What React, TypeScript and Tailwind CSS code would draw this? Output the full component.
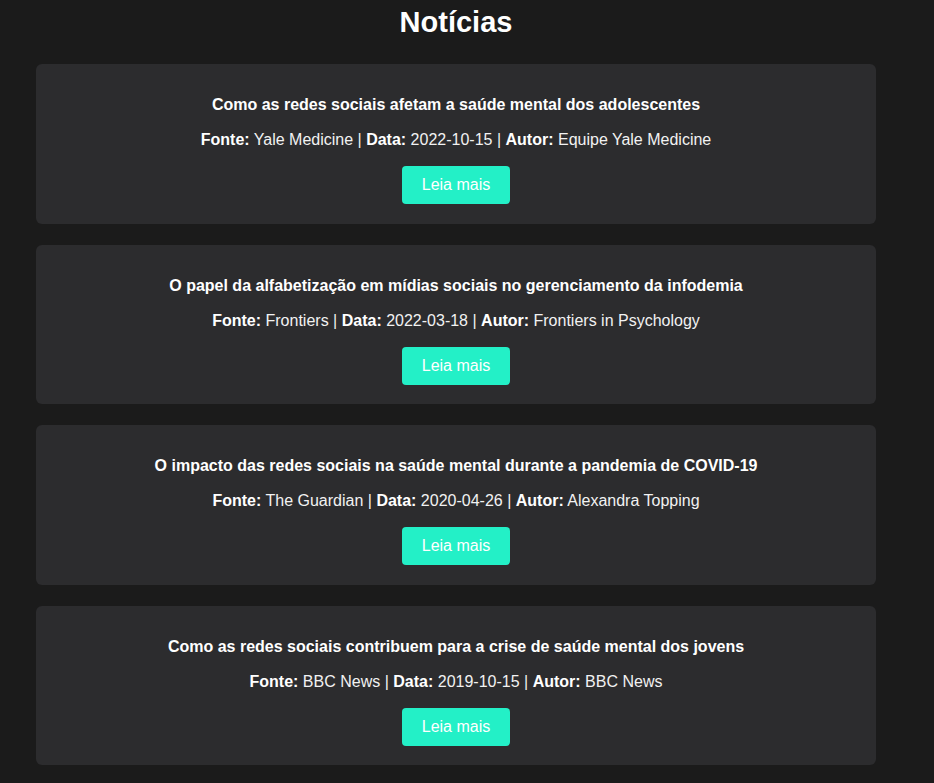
import React from 'react';

type Noticia = {
    titulo: string;
    fonte: string;
    data: string;
    autor: string;
};

const noticias: Noticia[] = [
    {
        titulo: 'Como as redes sociais afetam a saúde mental dos adolescentes',
        fonte: 'Yale Medicine',
        data: '2022-10-15',
        autor: 'Equipe Yale Medicine',
    },
    {
        titulo: 'O papel da alfabetização em mídias sociais no gerenciamento da infodemia',
        fonte: 'Frontiers',
        data: '2022-03-18',
        autor: 'Frontiers in Psychology',
    },
    {
        titulo: 'O impacto das redes sociais na saúde mental durante a pandemia de COVID-19',
        fonte: 'The Guardian',
        data: '2020-04-26',
        autor: 'Alexandra Topping',
    },
    {
        titulo: 'Como as redes sociais contribuem para a crise de saúde mental dos jovens',
        fonte: 'BBC News',
        data: '2019-10-15',
        autor: 'BBC News',
    },
];

const NoticiaCard = ({ noticia }: { noticia: Noticia }) => (
    <div className="rounded-md bg-[#2c2c2e] px-5 pt-5 pb-[19.5px] text-center">
        <h3 className="mt-3 text-base leading-[18px] font-bold text-white">
            {noticia.titulo}
        </h3>
        <p className="mt-[17px] text-base leading-[18px] text-[#f2f2f2]">
            <strong className="font-bold text-white">Fonte:</strong> {noticia.fonte} |{' '}
            <strong className="font-bold text-white">Data:</strong> {noticia.data} |{' '}
            <strong className="font-bold text-white">Autor:</strong> {noticia.autor}
        </p>
        <a
            href="#"
            className="mt-[17px] inline-block rounded bg-[#23f0c7] px-5 py-[10px] text-base leading-[18px] text-white"
        >
            Leia mais
        </a>
    </div>
);

export default function App() {
    return (
        <div className="min-h-[783px] bg-[#1b1b1b] font-['Liberation_Sans',Arial,sans-serif]">
            <div className="ml-9 w-[840px] pb-5">
                <h2 className="pt-[5px] text-center text-[29px] leading-[34px] font-bold text-white">
                    Notícias
                </h2>
                <div className="mt-[25px] flex flex-col gap-[21px]">
                    {noticias.map((n) => (
                        <NoticiaCard key={n.titulo} noticia={n} />
                    ))}
                </div>
            </div>
        </div>
    );
}
